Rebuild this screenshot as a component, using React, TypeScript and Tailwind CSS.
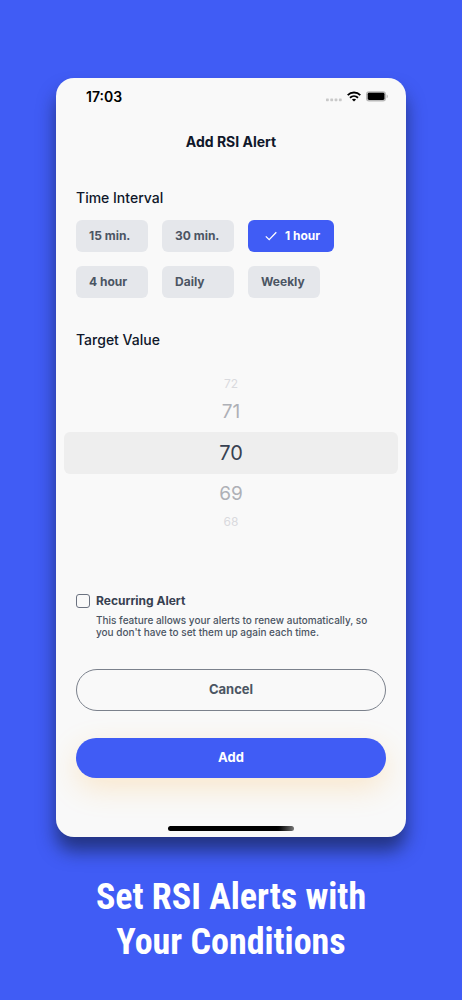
import { useState } from "react";

const intervals = ["15 min.", "30 min.", "1 hour", "4 hour", "Daily", "Weekly"];

function StatusBar() {
  return (
    <div className="flex h-9 items-center justify-between pr-[18px] pl-[30px] text-[14px] font-semibold text-black">
      <span>17:03</span>
      <svg width="62" height="14" viewBox="0 0 62 14" aria-hidden="true">
        <g fill="#c9c9c9">
          <rect x="0" y="9.4" width="2.8" height="2.8" rx="0.6" />
          <rect x="4.3" y="9.4" width="2.8" height="2.8" rx="0.6" />
          <rect x="8.6" y="9.4" width="2.8" height="2.8" rx="0.6" />
          <rect x="12.9" y="9.4" width="2.8" height="2.8" rx="0.6" />
        </g>
        <g fill="none" stroke="#000" strokeWidth="1.9">
          <path d="M21.7 6.1C25.2 2.7 30.8 2.7 34.3 6.1" />
          <path d="M24 8.7C26.3 6.6 29.7 6.6 32 8.7" />
        </g>
        <path d="M25.9 10.4C27.1 9.4 28.9 9.4 30.1 10.4L28 12.6Z" fill="#000" />
        <rect x="40" y="2.2" width="20" height="10.4" rx="3" fill="#b9b9b9" />
        <rect x="41.8" y="3.8" width="16.6" height="7.2" rx="1.4" fill="#000" />
        <path d="M60.6 5.6c1.6.6 1.6 3.1 0 3.7z" fill="#b5b5b5" />
      </svg>
    </div>
  );
}

function IntervalPicker() {
  const [selected, setSelected] = useState("1 hour");
  return (
    <div className="mt-3 flex flex-wrap gap-[14px]">
      {intervals.map((name) => {
        const active = name === selected;
        return (
          <button
            key={name}
            type="button"
            aria-pressed={active}
            onClick={() => setSelected(name)}
            className={
              active
                ? "flex h-8 items-center gap-2 rounded-md bg-[#405cf5] pr-[14px] pl-[17px] text-[12px] font-bold text-white"
                : "flex h-8 min-w-[72px] items-center rounded-md bg-[#e5e7eb] px-[13px] text-[12px] font-bold text-[#4b5563]"
            }
          >
            {active && (
              <svg width="12" height="10" viewBox="0 0 12 10" fill="none" stroke="currentColor" strokeWidth="1.3" aria-hidden="true">
                <path d="M0.8 5.4L4.2 8.7L11.3 1.2" />
              </svg>
            )}
            {name}
          </button>
        );
      })}
    </div>
  );
}

function ValueWheel() {
  const [value, setValue] = useState(70);
  const faint = "flex h-4 w-full items-center justify-center text-[12px] text-[#d9dade]";
  const near = "flex h-10 w-full items-center justify-center text-[19px] text-[#aeb0b6]";
  return (
    <div role="group" aria-label="Target Value" className="mx-2 mt-[26px]">
      <button type="button" className={faint} onClick={() => setValue(value + 2)}>{value + 2}</button>
      <button type="button" className={near} onClick={() => setValue(value + 1)}>{value + 1}</button>
      <output className="flex h-[42px] items-center justify-center rounded-md bg-[#eeeeee] text-[20px] text-[#374151]">
        {value}
      </output>
      <button type="button" className={near} onClick={() => setValue(value - 1)}>{value - 1}</button>
      <button type="button" className={faint} onClick={() => setValue(value - 2)}>{value - 2}</button>
    </div>
  );
}

export default function App() {
  return (
    <main className="min-h-screen bg-[#405cf5] px-14 pt-[78px] font-['Inter',sans-serif]">
      <section className="overflow-hidden rounded-[18px] bg-[#f9f9f9] pb-[6px] shadow-[0_14px_18px_rgba(20,30,70,0.65)]">
        <StatusBar />
        <h1 className="mt-[18px] text-center text-[14px] leading-5 font-bold text-[#0f172a]">Add RSI Alert</h1>

        <div className="px-5">
          <h2 className="mt-9 text-[14px] leading-5 font-medium text-[#0f172a]">Time Interval</h2>
          <IntervalPicker />
          <h2 className="mt-8 text-[14px] leading-5 font-medium text-[#0f172a]">Target Value</h2>
        </div>

        <ValueWheel />

        <div className="px-5">
          <div className="mt-[63px] grid grid-cols-[14px_1fr] items-center gap-x-[6px]">
            <input
              id="recurring"
              type="checkbox"
              aria-describedby="recurring-note"
              className="size-[14px] appearance-none rounded-[3px] border border-[#6b7280] bg-[#f9f9f9] checked:bg-[#405cf5]"
            />
            <label htmlFor="recurring" className="text-[12px] leading-4 font-bold text-[#374151]">Recurring Alert</label>
            <p id="recurring-note" className="col-start-2 mt-[5px] text-[10px] leading-3 font-medium text-[#4b5563]">
              This feature allows your alerts to renew automatically, so you don't have to set them up again each time.
            </p>
          </div>
          <button type="button" className="mt-[31px] h-[42px] w-full rounded-full border border-[#7b818c] text-[13px] font-bold text-[#4b5563]">
            Cancel
          </button>
          <button type="button" className="mt-[27px] h-10 w-full rounded-full bg-[#405cf5] text-[13px] font-bold text-white shadow-[0_10px_30px_rgba(255,170,40,0.22)]">
            Add
          </button>
        </div>

        <div className="mx-auto mt-12 h-[5px] w-[126px] rounded-full bg-linear-to-r from-black from-85% to-[#777777]" />
      </section>

      <p className="mt-[38px] text-center font-['Roboto_Condensed','Liberation_Sans_Narrow',sans-serif] text-[36px] leading-[45px] font-bold text-white">
        Set RSI Alerts with
        <br />
        Your Conditions
      </p>
    </main>
  );
}
